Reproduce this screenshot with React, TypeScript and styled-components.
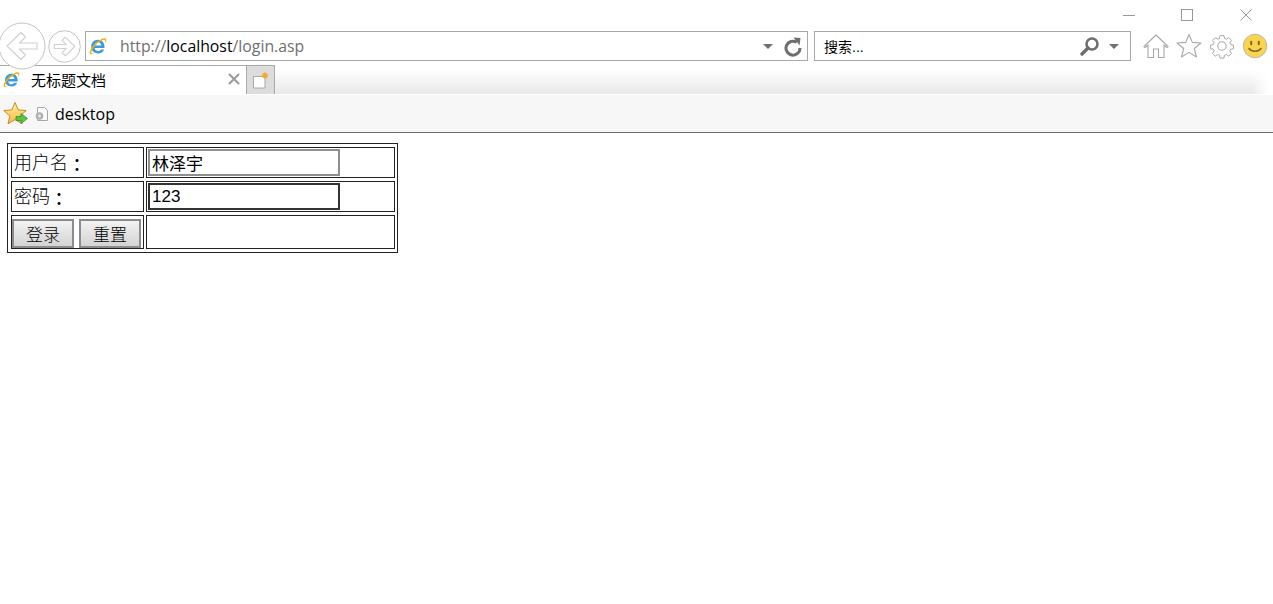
import styled, { createGlobalStyle } from 'styled-components';

const GlobalStyle = createGlobalStyle`
  html, body {
    margin: 0;
    padding: 0;
    background: #fff;
  }
  body {
    font-family: 'Liberation Sans', 'Noto Sans CJK SC', sans-serif;
    color: #000;
  }
`;

const IeLogo = ({ size }: { size: number }) => (
  <svg width={size} height={size} viewBox="0 0 18 18">
    <path
      transform="translate(-1.800 -1.900) scale(1.200)"
      d="M14.300 10.800H6.200c.2 1.600 1.300 2.500 2.800 2.500 1.100 0 1.900-.5 2.400-1.300h2.700c-.8 2-2.700 3.300-5.100 3.300-3.300 0-5.700-2.400-5.700-5.700S5.700 3.900 9 3.900s5.400 2.400 5.400 5.700c0 .4 0 .8-.1 1.200zM6.300 8.600h5.400C11.500 7 10.500 6 9 6S6.500 7 6.300 8.600z"
      fill="#3a9be0"
    />
    <path
      d="M1.200 17c-1.500-1.300.4-5.800 4.200-9.800C9.200 3.200 14.600.2 16.600 1.500c1.200.8.800 2.900-.2 4.800.2-1.500.1-2.800-.7-3.300C14 2 10 4.700 7 7.800 3.700 11.200 1.500 15 2.400 16.100c.5.600 1.600.5 2.900 0-1.500 1-3.200 1.600-4.100.9z"
      fill="#f4b000"
    />
  </svg>
);

const NavArrow = ({ size, flip }: { size: number; flip?: boolean }) => (
  <svg width={size} height={size} viewBox="0 0 48 48" style={flip ? { transform: 'scaleX(-1)' } : undefined}>
    <circle cx="24" cy="24" r="23" fill="#fff" stroke="#c4c4c4" strokeWidth={48 / size} />
    <path
      d="M9 24 23 10.500l4.500 4.500-6 6H39v6H21.500l6 6-4.500 4.500z"
      fill="#fff"
      stroke="#d0d0d0"
      strokeWidth={(48 / size) * 1.1}
      strokeLinejoin="round"
    />
  </svg>
);

const DropCaret = () => (
  <svg width="10" height="5" viewBox="0 0 10 5">
    <path d="M0 0h10L5 5z" fill="#707070" />
  </svg>
);

const RefreshIcon = () => (
  <svg width="18" height="21" viewBox="0 0 18 21">
    <path d="M12.800 6.300A7 7 0 1 0 16 12" fill="none" stroke="#6e6e6e" strokeWidth="3" />
    <path d="M9.500 1.500l7 .5-1 7.500z" fill="#6e6e6e" />
  </svg>
);

const SearchIcon = () => (
  <svg width="20" height="20" viewBox="0 0 20 20">
    <circle cx="12" cy="8" r="5.500" fill="none" stroke="#6e6e6e" strokeWidth="2.600" />
    <path d="M8 12l-6 6" stroke="#6e6e6e" strokeWidth="3.400" strokeLinecap="round" />
  </svg>
);

const HomeIcon = () => (
  <svg width="26" height="26" viewBox="0 0 26 26">
    <path
      d="M1 13.500 13 2l12 11.500-1.200 1.200L21 12v12.500h-5.500V16h-5v8.500H5V12l-2.800 2.700z"
      fill="#fff"
      stroke="#a8a8a8"
      strokeWidth="1.100"
      strokeLinejoin="round"
    />
  </svg>
);

const StarIcon = () => (
  <svg width="26" height="26" viewBox="0 0 26 26">
    <path
      d="M13 1.500l3.300 7.900 8.700.6-6.700 5.500 2.200 8.500L13 19.400l-7.500 4.600 2.200-8.500L1 10l8.700-.6z"
      fill="#fff"
      stroke="#a8a8a8"
      strokeWidth="1.100"
      strokeLinejoin="round"
    />
  </svg>
);

const GearIcon = () => (
  <svg width="26" height="26" viewBox="0 0 26 26">
    <path
      d="M10.800 1.500h4.400l.6 3.200 2 .8 2.700-1.800 3 3-1.800 2.700.8 2 3.200.6v4l-3.200.6-.8 2 1.800 2.700-3 3-2.700-1.800-2 .8-.6 3.200h-4.400l-.6-3.200-2-.8-2.700 1.800-3-3 1.800-2.700-.8-2-3.200-.6v-4l3.200-.6.8-2-1.800-2.700 3-3 2.700 1.800 2-.8z"
      fill="#fff"
      stroke="#a8a8a8"
      strokeWidth="1.100"
      strokeLinejoin="round"
      transform="translate(1.300 1.300) scale(.9)"
    />
    <circle cx="13" cy="13" r="4.200" fill="#fff" stroke="#a8a8a8" strokeWidth="1.100" />
  </svg>
);

const SmileIcon = () => (
  <svg width="26" height="26" viewBox="0 0 26 26">
    <circle cx="13" cy="13" r="11.800" fill="#fbd44e" stroke="#b9b9b9" strokeWidth="1" />
    <rect x="8.200" y="7.800" width="2" height="4.400" rx="1" fill="#7a6a30" />
    <rect x="15.800" y="7.800" width="2" height="4.400" rx="1" fill="#7a6a30" />
    <path d="M7 15.500c2.500 3.600 9.500 3.600 12 0" fill="none" stroke="#7a6a30" strokeWidth="1.600" strokeLinecap="round" />
  </svg>
);

const NewTabIcon = () => (
  <svg width="16" height="17" viewBox="0 0 16 17">
    <path d="M.5 4.500h11.500v11.500H.5z" fill="#fff" stroke="#a8a8a8" />
    <circle cx="12" cy="3.500" r="2.500" fill="#f7a72a" />
    <path d="M12 0v7M8.500 3.500h7M9.500 1l5 5M14.500 1l-5 5" stroke="#f7a72a" strokeWidth=".8" />
  </svg>
);

const FavStarIcon = () => (
  <svg width="25" height="26" viewBox="0 0 25 26">
    <defs>
      <linearGradient id="favStar" x1="0" y1="0" x2="0" y2="1">
        <stop offset="0" stopColor="#fff3a8" />
        <stop offset="1" stopColor="#f6b73c" />
      </linearGradient>
    </defs>
    <path
      d="M12 1.500l3.200 7.400 8 .7-6 5.300 1.800 7.900-7-4.200-7 4.200 1.800-7.900-6-5.300 8-.7z"
      fill="url(#favStar)"
      stroke="#c98a22"
      strokeWidth="1"
      strokeLinejoin="round"
    />
    <path d="M13 15.500h5v-3l6.500 5-6.500 5v-3h-5z" fill="#5cc43c" stroke="#2f8f2a" strokeWidth=".8" />
  </svg>
);

const PageIcon = () => (
  <svg width="16" height="16" viewBox="0 0 16 16">
    <path d="M3.500 1.500h7l3 3v10h-10z" fill="#fafafa" stroke="#a6a6a6" />
    <circle cx="5.500" cy="10" r="3.800" fill="#b0b0b0" />
    <circle cx="5.500" cy="10" r="1.400" fill="#eee" />
  </svg>
);

const App = () => {
  return (
    <>
      <GlobalStyle />
      <Page>
        <BackCircle>
          <NavArrow size={48} />
        </BackCircle>

        <TitleBar>
          <WindowButton>
            <svg width="12" height="12" viewBox="0 0 12 12">
              <path d="M0 6.500h12" stroke="#999" />
            </svg>
          </WindowButton>
          <WindowButton>
            <svg width="12" height="12" viewBox="0 0 12 12">
              <rect x=".5" y=".5" width="11" height="11" fill="none" stroke="#999" />
            </svg>
          </WindowButton>
          <WindowButton>
            <svg width="12" height="12" viewBox="0 0 12 12">
              <path d="M.5.500l11 11M11.500.500l-11 11" stroke="#999" />
            </svg>
          </WindowButton>
        </TitleBar>

        <AddressRow>
          <ForwardButton>
            <NavArrow size={33} flip />
          </ForwardButton>
          <AddressBox>
            <IeLogo size={18} />
            <Url>
              http://<b>localhost</b>/login.asp
            </Url>
            <DropCaret />
            <RefreshIcon />
          </AddressBox>
          <SearchBox>
            <SearchText>搜索...</SearchText>
            <SearchIcon />
            <DropCaret />
          </SearchBox>
          <ToolIcons>
            <HomeIcon />
            <StarIcon />
            <GearIcon />
            <SmileIcon />
          </ToolIcons>
        </AddressRow>

        <TabRow>
          <Tab>
            <IeLogo size={17} />
            <TabTitle>无标题文档</TabTitle>
            <svg width="12" height="12" viewBox="0 0 12 12">
              <path d="M1 1l10 10M11 1 1 11" stroke="#9a9a9a" strokeWidth="2" />
            </svg>
          </Tab>
          <NewTab>
            <NewTabIcon />
          </NewTab>
          <TabFiller />
        </TabRow>

        <FavBar>
          <FavStarIcon />
          <PageIcon />
          <FavLabel>desktop</FavLabel>
        </FavBar>

        <Content>
          <LoginTable>
            <tbody>
              <tr>
                <LabelCell>
                  用户名<Colon>：</Colon>
                </LabelCell>
                <FieldCell>
                  <TextInput readOnly value="林泽宇" />
                </FieldCell>
              </tr>
              <tr>
                <LabelCell>
                  密码<Colon>：</Colon>
                </LabelCell>
                <FieldCell>
                  <TextInput $focused readOnly value="123" />
                </FieldCell>
              </tr>
              <tr>
                <ButtonCell>
                  <FormButton type="button">登录</FormButton>
                  <FormButton type="button">重置</FormButton>
                </ButtonCell>
                <FieldCell />
              </tr>
            </tbody>
          </LoginTable>
        </Content>
      </Page>
    </>
  );
};

export default App;

const Page = styled.div`
  position: relative;
  width: 1273px;
  height: 604px;
  overflow: hidden;
  background: #fff;
`;

const BackCircle = styled.div`
  position: absolute;
  left: -2px;
  top: 22px;
  width: 48px;
  height: 48px;
  z-index: 2;
  svg {
    display: block;
  }
`;

const TitleBar = styled.div`
  height: 31px;
  display: flex;
  justify-content: flex-end;
`;

const WindowButton = styled.div`
  width: 58.500px;
  height: 31px;
  box-sizing: border-box;
  padding: 9px 0 0 25px;
  svg {
    display: block;
  }
`;

const AddressRow = styled.div`
  height: 30px;
  display: flex;
  align-items: stretch;
  padding-left: 48px;
`;

const ForwardButton = styled.div`
  width: 33px;
  margin-right: 4px;
  display: flex;
  align-items: center;
`;

const AddressBox = styled.div`
  width: 723px;
  box-sizing: border-box;
  border: 1px solid #a9a9a9;
  display: flex;
  align-items: center;
  gap: 11px;
  padding: 0 5px 0 3px;
  background: #fff;
`;

const Url = styled.span`
  flex: 1;
  margin-left: 2px;
  font-family: 'Open Sans', sans-serif;
  font-size: 15.800px;
  color: #707070;
  b {
    font-weight: 400;
    color: #000;
  }
`;

const SearchBox = styled.div`
  width: 317px;
  margin-left: 6px;
  box-sizing: border-box;
  border: 1px solid #a9a9a9;
  display: flex;
  align-items: center;
  gap: 9px;
  padding: 0 11px 0 9px;
  background: #fff;
`;

const SearchText = styled.span`
  flex: 1;
  font-size: 14px;
`;

const ToolIcons = styled.div`
  display: flex;
  align-items: center;
  gap: 7px;
  margin-left: 12px;
  svg {
    display: block;
  }
`;

const TabRow = styled.div`
  height: 29px;
  margin-top: 4px;
  display: flex;
  align-items: stretch;
`;

const Tab = styled.div`
  width: 247px;
  box-sizing: border-box;
  border-top: 1px solid #a9a9a9;
  border-right: 1px solid #a9a9a9;
  display: flex;
  align-items: center;
  padding: 0 6px 2px 3px;
  background: #fff;
`;

const TabTitle = styled.span`
  flex: 1;
  margin-left: 11px;
  font-size: 15px;
  font-family: 'Noto Sans CJK SC', sans-serif;
`;

const NewTab = styled.div`
  width: 28px;
  box-sizing: border-box;
  border-top: 1px solid #a9a9a9;
  border-right: 1px solid #a9a9a9;
  background: #dcdcdc;
  display: flex;
  align-items: center;
  justify-content: center;
`;

const TabFiller = styled.div`
  flex: 1;
  background:
    linear-gradient(to right, rgba(255, 255, 255, 0) 97.9%, #fff 99.5%),
    linear-gradient(#fff 15%, #ebebeb 90%);
`;

const FavBar = styled.div`
  height: 39px;
  box-sizing: border-box;
  background: #f7f7f7;
  border-top: 1px solid #fff;
  border-bottom: 1px solid #6b6b6b;
  display: flex;
  align-items: center;
  padding-left: 3px;
  svg + svg {
    margin-left: 6px;
  }
`;

const FavLabel = styled.span`
  margin-left: 5px;
  font-family: 'Open Sans', sans-serif;
  font-size: 16px;
  color: #000;
`;

const Content = styled.div`
  padding: 10px 7px;
`;

const LoginTable = styled.table`
  width: 391px;
  table-layout: fixed;
  box-sizing: border-box;
  padding-left: 1px;
  border: 1px solid #222;
  border-spacing: 2px 3px;
  border-collapse: separate;
`;

const Cell = styled.td`
  box-sizing: border-box;
  height: 31px;
  border: 1px solid #222;
  padding: 1px;
`;

const LabelCell = styled(Cell)`
  width: 133px;
  padding: 0 0 3px 2px;
  font-size: 18px;
  line-height: 24px;
  font-family: 'Noto Sans CJK SC', serif;
  font-weight: 300;
`;

const Colon = styled.span`
  font-family: 'Noto Sans CJK TC', sans-serif;
  font-weight: 500;
  line-height: 0;
  vertical-align: -3px;
`;

const FieldCell = styled(Cell)`
  tr:last-child > & {
    height: 34px;
  }
`;

const ButtonCell = styled(Cell)`
  padding: 2px 0 0;
  line-height: 0;
  white-space: nowrap;
`;

const TextInput = styled.input<{ $focused?: boolean }>`
  display: block;
  width: 192px;
  height: 27px;
  box-sizing: border-box;
  padding: 0 2px;
  font-size: 17px;
  font-family: 'Liberation Sans', 'Noto Sans CJK SC', sans-serif;
  color: #000;
  outline: none;
  background: #fff;
  border: 2px solid ${({ $focused }) => ($focused ? '#333' : '#8f8f8f')};
`;

const FormButton = styled.button`
  width: 62px;
  height: 29px;
  margin-right: 5px;
  padding: 0;
  font-size: 17px;
  line-height: 25px;
  font-family: 'Noto Sans CJK SC', sans-serif;
  font-weight: 300;
  color: #000;
  border: 2px solid #8c8c8c;
  background: linear-gradient(#f2f2f2, #d4d4d4);
  vertical-align: top;
  &:last-child {
    margin-right: 0;
  }
`;
